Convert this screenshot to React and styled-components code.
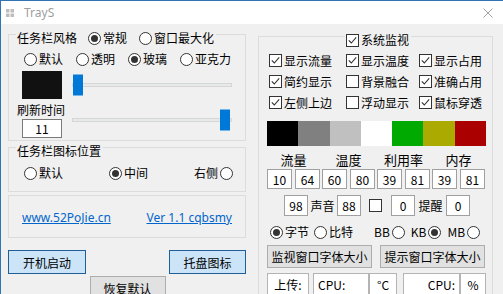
import React from 'react';
import styled, { createGlobalStyle } from 'styled-components';

const GlobalStyle = createGlobalStyle`
  html, body {
    margin: 0;
    padding: 0;
    background: #f0f0f0;
    overflow: hidden;
  }
  body {
    font-family: "Noto Sans CJK SC", "Noto Sans", sans-serif;
    font-size: 12px;
    color: #000;
  }
`;

const Window = styled.div`
  width: 503px;
  height: 294px;
  box-sizing: border-box;
  border-left: 1px solid #2f74b5;
  border-top: 1px solid #2f74b5;
  display: flex;
  flex-direction: column;
  overflow: hidden;
  background: #f0f0f0;
`;

const TitleBar = styled.div`
  height: 23px;
  flex-shrink: 0;
  background: #fff;
  display: flex;
  align-items: center;
  padding: 0 10px 0 5px;
  gap: 10px;
`;

const Title = styled.span`
  font-family: "Noto Sans", "Liberation Sans", sans-serif;
  font-size: 12px;
  color: #a0a0a0;
`;

const CloseBtn = styled.svg`
  margin-left: auto;
`;

const Body = styled.div`
  display: flex;
  gap: 12px;
  padding: 10px 0 0 7px;
  align-items: flex-start;
`;

const Column = styled.div`
  width: ${(p) => p.$w};
  flex-shrink: 0;
  display: flex;
  flex-direction: column;
  margin-top: ${(p) => p.$mt || '0'};
`;

const GroupBox = styled.div`
  position: relative;
  border: 1px solid #dcdcdc;
  margin-top: ${(p) => p.$mt || '0'};
  padding: ${(p) => p.$pad};
`;

const Legend = styled.div`
  position: absolute;
  top: -5px;
  left: ${(p) => p.$left || '7px'};
  height: 16px;
  line-height: 16px;
  padding: 0 2px 0 1px;
  background: #f0f0f0;
  display: flex;
  align-items: center;
  gap: ${(p) => p.$gap || '0'};
  white-space: nowrap;
`;

const RadioLabel = styled.label`
  display: inline-flex;
  align-items: center;
  flex-direction: ${(p) => (p.$reverse ? 'row-reverse' : 'row')};
  gap: 2px;
  height: 16px;
  line-height: 16px;
  white-space: nowrap;
`;

const RadioCircle = styled.span`
  width: 13px;
  height: 13px;
  box-sizing: border-box;
  border-radius: 50%;
  border: 1px solid #333;
  background: #fff;
  display: flex;
  align-items: center;
  justify-content: center;
  flex-shrink: 0;
  &::after {
    content: '';
    width: 7px;
    height: 7px;
    border-radius: 50%;
    background: #333;
    display: ${(p) => (p.$checked ? 'block' : 'none')};
  }
`;

const CheckSquare = styled.span`
  width: 13px;
  height: 13px;
  box-sizing: border-box;
  border: 1px solid #333;
  background: #fff;
  display: flex;
  align-items: center;
  justify-content: center;
  flex-shrink: 0;
`;

const CheckLabel = styled.label`
  display: inline-flex;
  align-items: center;
  gap: 2px;
  height: 21px;
  white-space: nowrap;
`;

const Radio = ({ checked, reverse, children }) => (
  <RadioLabel $reverse={reverse}>
    <RadioCircle $checked={checked} />
    {children}
  </RadioLabel>
);

const Box = ({ checked }) => (
  <CheckSquare>
    {checked && (
      <svg width="11" height="11" viewBox="0 0 11 11">
        <path d="M1.8 5.4 L4.3 8 L9.2 2.4" stroke="#333" strokeWidth="1.1" fill="none" />
      </svg>
    )}
  </CheckSquare>
);

const Check = ({ checked, children }) => (
  <CheckLabel>
    <Box checked={checked} />
    {children}
  </CheckLabel>
);

const RadioRow = styled.div`
  display: flex;
  align-items: center;
  gap: ${(p) => p.$gap || '0'};
  padding-left: ${(p) => p.$pl || '0'};
  justify-content: ${(p) => p.$justify || 'flex-start'};
  height: 16px;
`;

const StyleArea = styled.div`
  display: flex;
  margin-top: 4px;
  padding-left: 8px;
`;

const StyleLeft = styled.div`
  width: 55px;
  display: flex;
  flex-direction: column;
`;

const Swatch = styled.div`
  width: 40px;
  height: 28px;
  margin-left: 5px;
  background: #111;
`;

const FieldLabel = styled.div`
  margin-top: 3px;
  height: 16px;
  line-height: 16px;
  white-space: nowrap;
`;

const TextBox = styled.div`
  width: 40px;
  height: 19px;
  box-sizing: border-box;
  margin: 1px 0 0 5px;
  border: 1px solid #7a7a7a;
  background: #fff;
  text-align: center;
  line-height: 17px;
`;

const StyleRight = styled.div`
  width: 160px;
  display: flex;
  flex-direction: column;
`;

const SliderWrap = styled.div`
  height: ${(p) => p.$h};
  margin-top: ${(p) => p.$mt || '0'};
  display: flex;
  align-items: center;
`;

const Track = styled.div`
  position: relative;
  width: 100%;
  height: 4px;
  box-sizing: border-box;
  background: #e7eaea;
  border: 1px solid #d6d6d6;
`;

const Thumb = styled.div`
  position: absolute;
  top: 50%;
  transform: translateY(-50%);
  ${(p) => (p.$end ? 'right: 1px;' : 'left: 0;')}
  width: 10px;
  height: 21px;
  background: #0078d7;
`;

const Slider = ({ h, mt, end }) => (
  <SliderWrap $h={h} $mt={mt}>
    <Track>
      <Thumb $end={end} />
    </Track>
  </SliderWrap>
);

const LinkText = styled.a`
  color: #0066cc;
  text-decoration: underline;
  height: 16px;
  line-height: 16px;
  font-family: "Noto Sans", "Liberation Sans", sans-serif;
  font-size: 12px;
`;

const ButtonRow = styled.div`
  display: flex;
  justify-content: space-between;
  align-items: flex-start;
  margin-top: 12px;
`;

const Button = styled.div`
  width: ${(p) => p.$w};
  height: ${(p) => p.$h || '24px'};
  margin-top: ${(p) => p.$mt || '0'};
  box-sizing: border-box;
  display: flex;
  align-items: center;
  justify-content: center;
  white-space: nowrap;
  background: ${(p) => (p.$primary ? '#cce4f7' : '#e1e1e1')};
  border: 1px solid ${(p) => (p.$primary ? '#1f5f96' : '#adadad')};
`;

const CheckGrid = styled.div`
  display: grid;
  grid-template-columns: 77px 73px auto;
  margin-left: 2px;
`;

const ColorBar = styled.div`
  display: flex;
  width: 219px;
  height: 25px;
  margin-top: 8px;
`;

const ColorCell = styled.div`
  flex: 1;
  background: ${(p) => p.$color};
`;

const MeterGrid = styled.div`
  display: flex;
  gap: 2px;
  margin-top: 6px;
`;

const MeterPair = styled.div`
  width: 53px;
  display: flex;
  flex-direction: column;
  align-items: center;
`;

const MeterName = styled.div`
  height: 16px;
  line-height: 16px;
  font-size: 13px;
`;

const PairBoxes = styled.div`
  display: flex;
  gap: 3px;
  margin-top: 1px;
`;

const NumBox = styled.div`
  width: ${(p) => p.$w || '25px'};
  height: ${(p) => p.$h || '20px'};
  box-sizing: border-box;
  border: 1px solid #a0a0a0;
  background: #fff;
  display: flex;
  align-items: center;
  justify-content: center;
  font-size: 12px;
`;

const ExtraRow = styled.div`
  display: flex;
  align-items: center;
  margin: 6px 0 0 17px;
  height: 21px;
`;

const InlineLabel = styled.span`
  width: ${(p) => p.$w};
  text-align: center;
  font-size: 12px;
`;

const UnitRow = styled.div`
  display: flex;
  align-items: center;
  height: 16px;
  margin: 8px 0 0 3px;
`;

const FontButtons = styled.div`
  display: flex;
  gap: 8px;
  margin-top: 5px;
`;

const StatusRow = styled.div`
  display: flex;
  margin-top: 5px;
`;

const StatusBox = styled.div`
  width: ${(p) => p.$w};
  height: 22px;
  box-sizing: border-box;
  margin-left: ${(p) => p.$ml || '0'};
  border: 1px solid #b4b4b4;
  background: #fff;
  display: flex;
  align-items: center;
  justify-content: ${(p) => p.$align || 'center'};
  padding: 0 4px;
  white-space: nowrap;
`;

const colors = ['#000000', '#808080', '#c0c0c0', '#ffffff', '#00aa00', '#aaaa00', '#aa0000'];

const meters = [
  { name: '流量', a: '10', b: '64' },
  { name: '温度', a: '60', b: '80' },
  { name: '利用率', a: '39', b: '81' },
  { name: '内存', a: '39', b: '81' },
];

const App = () => {
  return (
    <Window>
      <GlobalStyle />
      <TitleBar>
        <svg width="8" height="8" viewBox="0 0 8 8">
          <rect x="0" y="0" width="3.5" height="3.5" fill="#bdbdbd" />
          <rect x="4.5" y="0" width="3.5" height="3.5" fill="#bdbdbd" />
          <rect x="0" y="4.5" width="3.5" height="3.5" fill="#bdbdbd" />
          <rect x="4.5" y="4.5" width="3.5" height="3.5" fill="#bdbdbd" />
        </svg>
        <Title>TrayS</Title>
        <CloseBtn width="10" height="10" viewBox="0 0 10 10">
          <path d="M0.5 0.5 L9.5 9.5 M9.5 0.5 L0.5 9.5" stroke="#a0a0a0" strokeWidth="1" />
        </CloseBtn>
      </TitleBar>
      <Body>
        <Column $w="238px">
          <GroupBox $pad="16px 0 2px 0">
            <Legend $gap="11px">
              <span>任务栏风格</span>
              <RadioRow $gap="12px">
                <Radio checked>常规</Radio>
                <Radio>窗口最大化</Radio>
              </RadioRow>
            </Legend>
            <RadioRow $pl="15px" $gap="13px">
              <Radio>默认</Radio>
              <Radio>透明</Radio>
              <Radio checked>玻璃</Radio>
              <Radio>亚克力</Radio>
            </RadioRow>
            <StyleArea>
              <StyleLeft>
                <Swatch />
                <FieldLabel>刷新时间</FieldLabel>
                <TextBox>11</TextBox>
              </StyleLeft>
              <StyleRight>
                <Slider h="28px" />
                <Slider h="36px" mt="3px" end />
              </StyleRight>
            </StyleArea>
          </GroupBox>
          <GroupBox $mt="6px" $pad="17px 12px 10px 15px">
            <Legend>任务栏图标位置</Legend>
            <RadioRow $justify="space-between">
              <Radio>默认</Radio>
              <Radio checked>中间</Radio>
              <Radio reverse>右侧</Radio>
            </RadioRow>
          </GroupBox>
          <GroupBox $mt="3px" $pad="14px 13px 11px 13px">
            <RadioRow $justify="space-between">
              <LinkText>www.52PoJie.cn</LinkText>
              <LinkText>Ver 1.1 cqbsmy</LinkText>
            </RadioRow>
          </GroupBox>
          <ButtonRow>
            <Button $w="78px" $primary>开机启动</Button>
            <Button $w="76px" $mt="26px">恢复默认</Button>
            <Button $w="77px" $primary>托盘图标</Button>
          </ButtonRow>
        </Column>
        <Column $w="235px" $mt="2px">
          <GroupBox $pad="13px 0 20px 8px">
            <Legend $left="86px" $gap="2px">
              <Box checked />
              <span>系统监视</span>
            </Legend>
            <CheckGrid>
              <Check checked>显示流量</Check>
              <Check checked>显示温度</Check>
              <Check checked>显示占用</Check>
              <Check checked>简约显示</Check>
              <Check>背景融合</Check>
              <Check checked>准确占用</Check>
              <Check checked>左侧上边</Check>
              <Check>浮动显示</Check>
              <Check checked>鼠标穿透</Check>
            </CheckGrid>
            <ColorBar>
              {colors.map((c) => (
                <ColorCell key={c} $color={c} />
              ))}
            </ColorBar>
            <MeterGrid>
              {meters.map((m) => (
                <MeterPair key={m.name}>
                  <MeterName>{m.name}</MeterName>
                  <PairBoxes>
                    <NumBox>{m.a}</NumBox>
                    <NumBox>{m.b}</NumBox>
                  </PairBoxes>
                </MeterPair>
              ))}
            </MeterGrid>
            <ExtraRow>
              <NumBox $w="24px" $h="21px">98</NumBox>
              <InlineLabel $w="29px">声音</InlineLabel>
              <NumBox $w="24px" $h="21px">88</NumBox>
              <InlineLabel $w="8px" />
              <Box />
              <InlineLabel $w="9px" />
              <NumBox $w="24px" $h="21px">0</NumBox>
              <InlineLabel $w="31px">提醒</InlineLabel>
              <NumBox $w="24px" $h="21px">0</NumBox>
            </ExtraRow>
            <UnitRow>
              <Radio checked>字节</Radio>
              <InlineLabel $w="5px" />
              <Radio>比特</Radio>
              <InlineLabel $w="21px" />
              <Radio reverse>BB</Radio>
              <InlineLabel $w="6px" />
              <Radio reverse checked>KB</Radio>
              <InlineLabel $w="6px" />
              <Radio reverse>MB</Radio>
            </UnitRow>
            <FontButtons>
              <Button $w="105px" $h="23px">监视窗口字体大小</Button>
              <Button $w="105px" $h="23px">提示窗口字体大小</Button>
            </FontButtons>
            <StatusRow>
              <StatusBox $w="42px">上传:</StatusBox>
              <StatusBox $w="56px" $ml="4px" $align="flex-start">CPU:</StatusBox>
              <StatusBox $w="28px">°C</StatusBox>
              <StatusBox $w="57px" $ml="6px" $align="flex-end">CPU:</StatusBox>
              <StatusBox $w="26px">%</StatusBox>
            </StatusRow>
          </GroupBox>
        </Column>
      </Body>
    </Window>
  );
};

export default App;
